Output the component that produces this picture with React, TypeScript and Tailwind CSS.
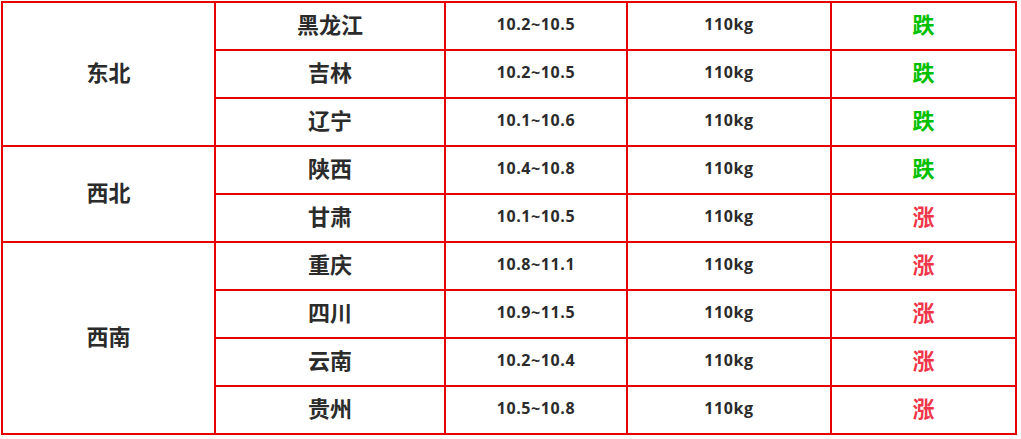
const rows = [
  { region: "东北", span: 3, province: "黑龙江", range: "10.2~10.5", weight: "110kg", trend: "跌" },
  { province: "吉林", range: "10.2~10.5", weight: "110kg", trend: "跌" },
  { province: "辽宁", range: "10.1~10.6", weight: "110kg", trend: "跌" },
  { region: "西北", span: 2, province: "陕西", range: "10.4~10.8", weight: "110kg", trend: "跌" },
  { province: "甘肃", range: "10.1~10.5", weight: "110kg", trend: "涨" },
  { region: "西南", span: 4, province: "重庆", range: "10.8~11.1", weight: "110kg", trend: "涨" },
  { province: "四川", range: "10.9~11.5", weight: "110kg", trend: "涨" },
  { province: "云南", range: "10.2~10.4", weight: "110kg", trend: "涨" },
  { province: "贵州", range: "10.5~10.8", weight: "110kg", trend: "涨" },
];

const cell = "border-2 border-[#e60000] text-center align-middle p-0 pb-[4px]";

export default function App() {
  return (
    <div className="w-[1021px] h-[439px] bg-white pt-[1px] pl-[1px] font-['Open_Sans','Noto_Sans_CJK_SC',sans-serif] text-[#2b2b2b]">
      <table className="table-fixed border-collapse w-[1014px]">
        <colgroup>
          <col className="w-[213px]" />
          <col className="w-[230px]" />
          <col className="w-[182px]" />
          <col className="w-[204px]" />
          <col className="w-[185px]" />
        </colgroup>
        <tbody>
          {rows.map((r) => (
            <tr key={r.province} className="h-[48px]">
              {r.region && (
                <td rowSpan={r.span} className={`${cell} text-[22px] font-bold`}>
                  {r.region}
                </td>
              )}
              <td className={`${cell} text-[22px] font-bold`}>{r.province}</td>
              <td className={`${cell} text-[16px] font-bold tracking-[0.6px]`}>{r.range}</td>
              <td className={`${cell} text-[16px] font-bold tracking-[0.6px]`}>{r.weight}</td>
              <td
                className={`${cell} text-[22px] font-bold ${
                  r.trend === "跌" ? "text-[#00c000]" : "text-[#f0364a]"
                }`}
              >
                {r.trend}
              </td>
            </tr>
          ))}
        </tbody>
      </table>
    </div>
  );
}
